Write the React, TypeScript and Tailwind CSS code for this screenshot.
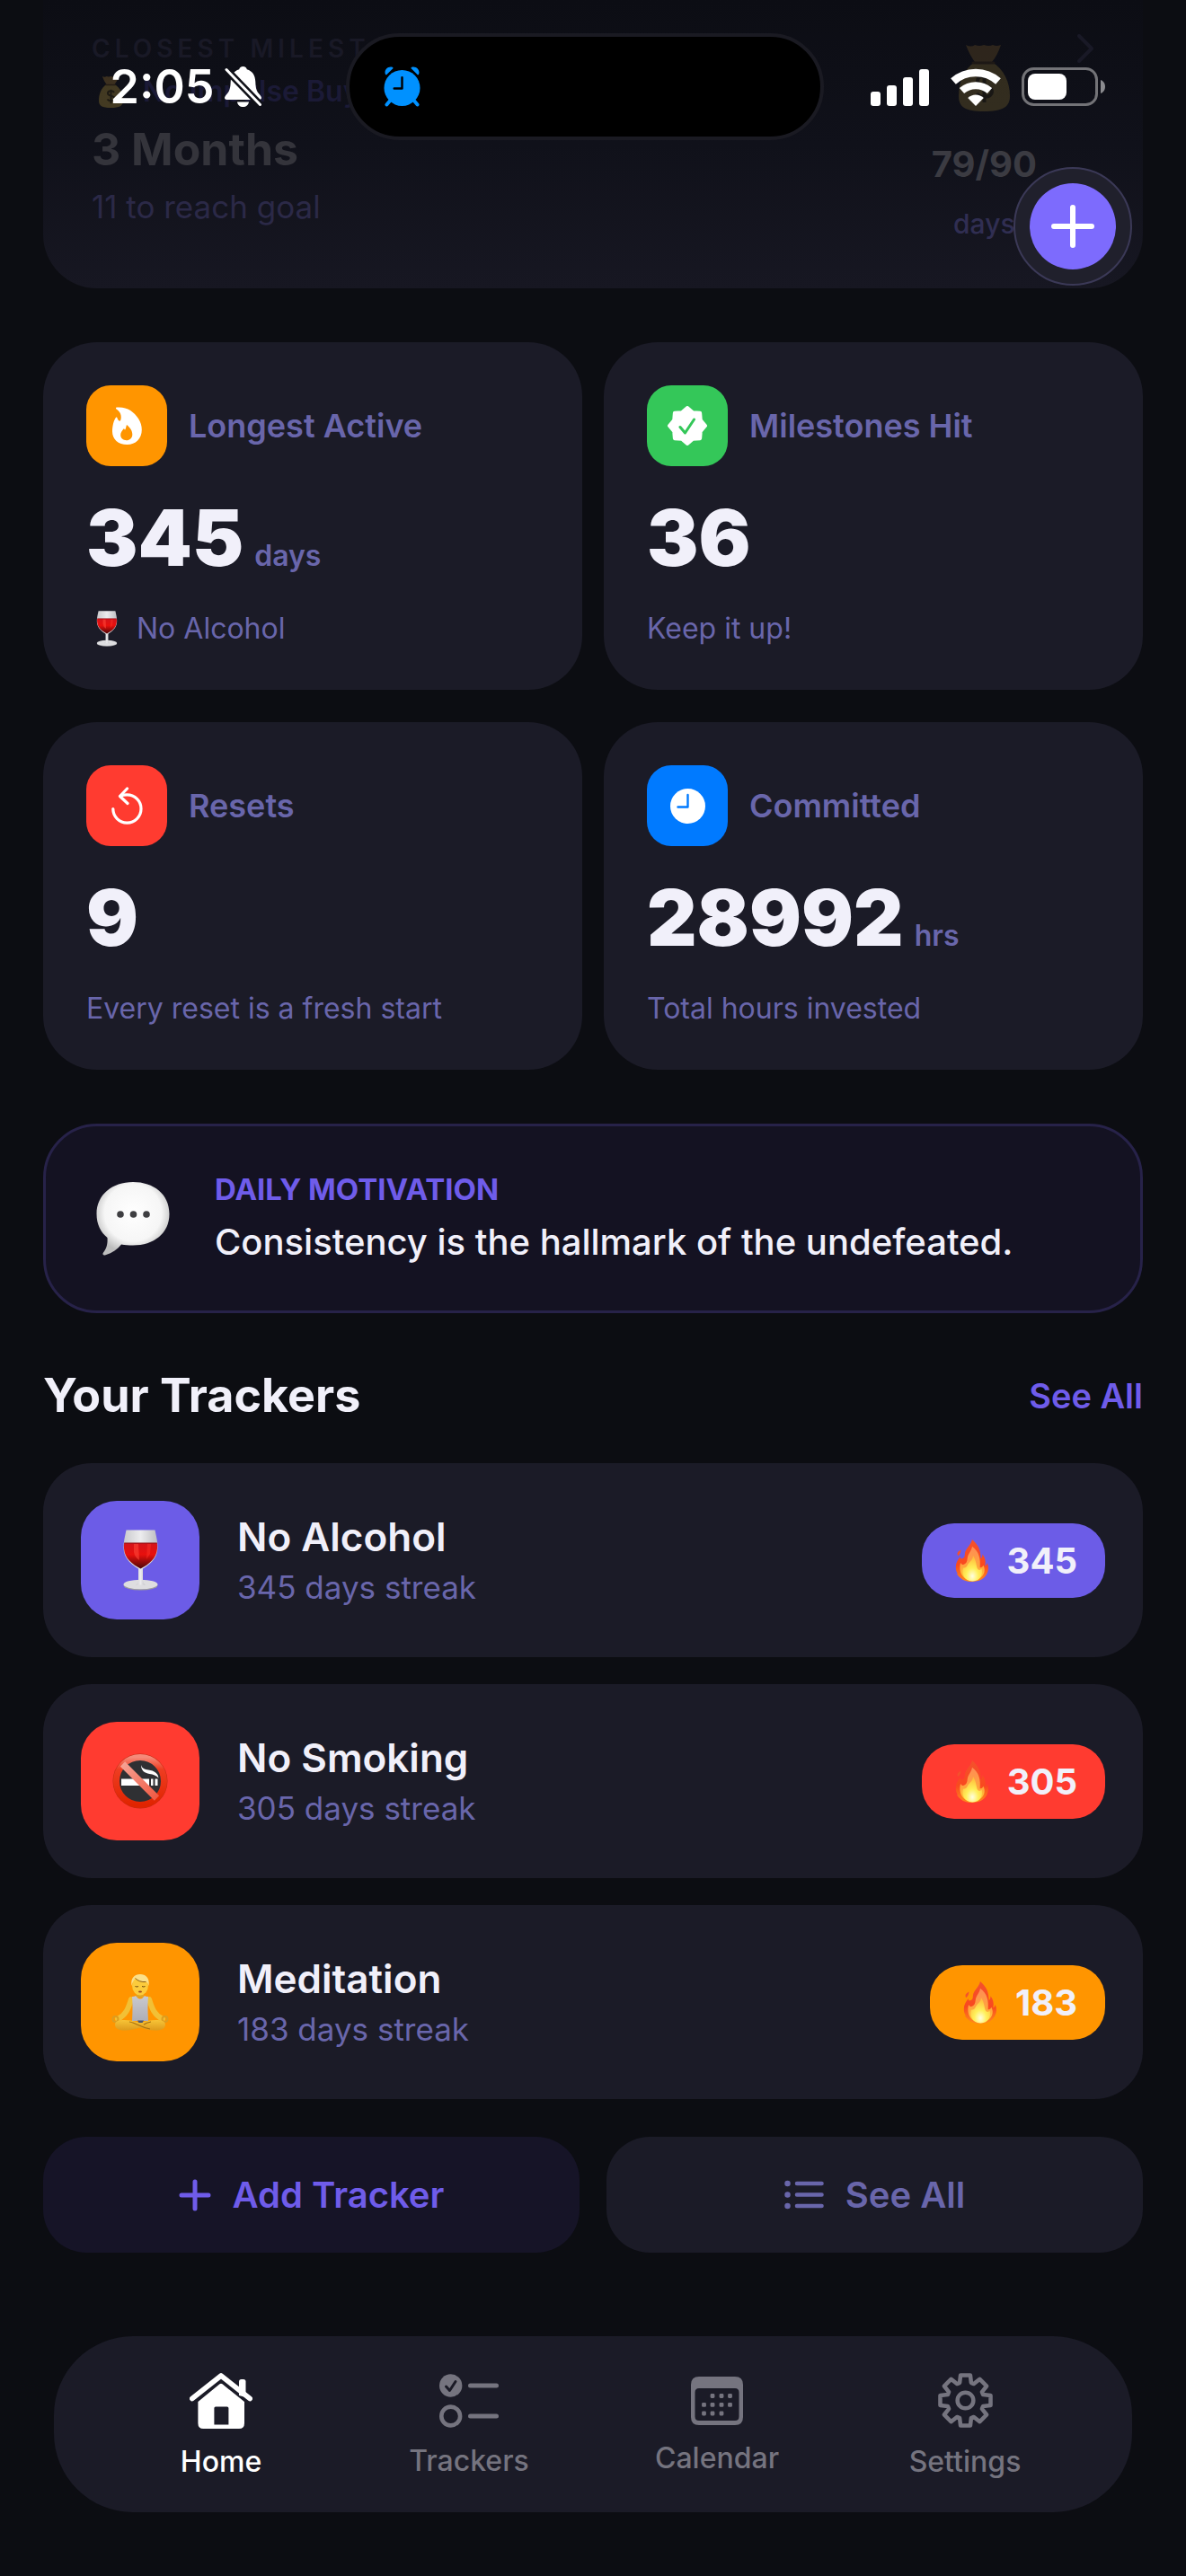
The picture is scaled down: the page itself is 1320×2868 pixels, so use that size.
import type { ReactNode } from "react";

type IconProps = { className?: string };

function polar(cx: number, cy: number, r: number, deg: number) {
  const a = ((deg - 90) * Math.PI) / 180;
  return `${(cx + r * Math.cos(a)).toFixed(2)},${(cy + r * Math.sin(a)).toFixed(2)}`;
}

const gearPoints = Array.from({ length: 8 })
  .flatMap((_, i) => {
    const a = i * 45;
    return [polar(32, 32, 21, a - 18), polar(32, 32, 29, a - 11), polar(32, 32, 29, a + 11), polar(32, 32, 21, a + 18)];
  })
  .join(" ");

const sealPoints = Array.from({ length: 16 })
  .map((_, i) => polar(22, 22, i % 2 === 0 ? 20 : 16, i * 22.5))
  .join(" ");

/* Emoji */

function WineGlass({ className }: IconProps) {
  return (
    <svg viewBox="0 0 39 68" className={className} aria-hidden="true">
      <defs>
        <linearGradient id="glass" x1="0" x2="1">
          <stop offset="0" stopColor="#c9c9cc" />
          <stop offset="0.5" stopColor="#ececee" />
          <stop offset="1" stopColor="#bdbdc1" />
        </linearGradient>
        <linearGradient id="wine" x1="0" y1="0" x2="0" y2="1">
          <stop offset="0" stopColor="#d3141b" />
          <stop offset="0.45" stopColor="#e8100d" />
          <stop offset="1" stopColor="#4a0507" />
        </linearGradient>
      </defs>
      <ellipse cx="19.5" cy="62" rx="19" ry="5.6" fill="#9b9b9f" />
      <ellipse cx="19.5" cy="61" rx="19" ry="5.2" fill="#dedee0" />
      <path d="M17 42h5v14q0 4 3 5.500h-11q3-1.500 3-5.500z" fill="url(#glass)" />
      <path d="M3.500 0.500h32C37 8 38.500 13 38.500 20c0 13-10 20-19 25C10.500 40 0.500 33 0.500 20 0.500 13 2 8 3.500 0.500z" fill="url(#glass)" />
      <path d="M1.200 15h36.600c.4 2 .4 4 .2 6-.8 11-9 17.500-18.500 22.500C10 38.500 1.800 32 1 21c-.2-2-.2-4 .2-6z" fill="url(#wine)" />
      <path d="M12 16h5l1 18q-5-3-6-9z" fill="#ff4a3c" opacity="0.55" />
      <path d="M27 16h4l-1 11-4 6z" fill="#ff3a2e" opacity="0.4" />
      <path d="M1.200 15h36.600" stroke="#8c1015" strokeWidth="1" />
    </svg>
  );
}

function Flame({ className }: IconProps) {
  return (
    <svg viewBox="0 0 38 49" className={className} aria-hidden="true">
      <defs>
        <linearGradient id="flameOuter" x1="0" y1="0" x2="0" y2="1">
          <stop offset="0" stopColor="#f4512c" />
          <stop offset="0.6" stopColor="#f9491f" />
          <stop offset="1" stopColor="#ff8a1c" />
        </linearGradient>
        <linearGradient id="flameMid" x1="0" y1="0" x2="0" y2="1">
          <stop offset="0" stopColor="#ff8c55" />
          <stop offset="0.6" stopColor="#ffa63d" />
          <stop offset="1" stopColor="#ffd034" />
        </linearGradient>
        <radialGradient id="flameCore" cx="0.5" cy="0.8" r="0.7">
          <stop offset="0" stopColor="#fffde0" />
          <stop offset="0.45" stopColor="#fff05a" />
          <stop offset="1" stopColor="#ffc13d" />
        </radialGradient>
      </defs>
      <path d="M6 12c-4 2-5 4-3.500 7C5 17 5.500 15 6 12z" fill="#f4512c" />
      <path
        d="M19 0c-2 8-8 10-8.500 17 0 2-.5 4-1.500 4.500C7.500 22 6 24 5 20 2 24 0 27 0 32c0 4 1 6 2.500 8L1 39.500C5 46 11 49 19 49s14-3 17-9c2-4 2.500-8 .5-13-.5 2-1.500 3-2.500 3.500C35 25 34 21 31 17c0 3-.5 4-2 5C29 12 26 6 19 0z"
        fill="url(#flameOuter)"
      />
      <path
        d="M19 8c-1 6-5 8-5.500 14-.3 4-1.500 6-4 7-1.500.6-3-.5-4-2C3 36 7 47 19 47.500 31 47 36 38 32 30c-1 2-2 3-4 2.500C29 22 27 14 19 8z"
        fill="url(#flameMid)"
      />
      <path
        d="M20 19c0 5-5 7-6.500 11-.8 2-2.500 3-5 3C6.500 40 10 48 19 48.500S32 41 30 34c-1 1.500-3 2-4.500.5C23.500 31 24 24 20 19z"
        fill="url(#flameCore)"
      />
    </svg>
  );
}

function NoSmoking({ className }: IconProps) {
  return (
    <svg viewBox="0 0 62 62" className={className} aria-hidden="true">
      <defs>
        <linearGradient id="ban" x1="0" y1="0" x2="0" y2="1">
          <stop offset="0" stopColor="#f58a79" />
          <stop offset="0.25" stopColor="#ee3d22" />
          <stop offset="1" stopColor="#e02400" />
        </linearGradient>
        <linearGradient id="slash" x1="0" y1="0" x2="1" y2="1">
          <stop offset="0" stopColor="#f7a193" />
          <stop offset="1" stopColor="#ef5a43" />
        </linearGradient>
      </defs>
      <circle cx="31" cy="31" r="30.500" fill="#c22a13" />
      <circle cx="31" cy="31" r="26.500" fill="#2f3033" stroke="url(#ban)" strokeWidth="7" />
      <path d="M10 28.500h31v7.500H10zM43 28.500h2.500v7.500H43zM47.500 28.500h3v7.500h-3z" fill="#fff" />
      <path d="M32 13c1 4 4 5 8 5.500 7 .8 11 4 11.500 9-2.500-3-6-3.800-10-4.500-6-1-9.500-4-9.500-10z" fill="#fff" />
      <path d="M11.500 12l38 38" stroke="url(#slash)" strokeWidth="7.500" />
    </svg>
  );
}

function Meditating({ className }: IconProps) {
  return (
    <svg viewBox="0 0 64 63" className={className} aria-hidden="true">
      <defs>
        <linearGradient id="legs" x1="0" y1="0" x2="0" y2="1">
          <stop offset="0" stopColor="#f7c437" />
          <stop offset="1" stopColor="#dd9a1c" />
        </linearGradient>
        <linearGradient id="shirt" x1="0" y1="0" x2="0" y2="1">
          <stop offset="0" stopColor="#c9c9ce" />
          <stop offset="1" stopColor="#aeaeb5" />
        </linearGradient>
      </defs>
      <path d="M22 28c-3 9-5 17-15 22M42 28c3 9 5 17 15 22" fill="none" stroke="#f2c035" strokeWidth="6" strokeLinecap="round" />
      <circle cx="4.500" cy="50" r="3" fill="none" stroke="#dd9d1f" strokeWidth="2" />
      <circle cx="59.500" cy="50" r="3" fill="none" stroke="#dd9d1f" strokeWidth="2" />
      <path d="M28 18h8v8h-8z" fill="#e0a524" />
      <path d="M23 25q3 0 4-1 5 7 10 0 1 1 4 1-1 10 0 27H23q1-17 0-27z" fill="url(#shirt)" />
      <path d="M4 56c0-4 5-5 10-5 6 0 11 1 18 3 7-2 12-3 18-3 5 0 10 1 10 5 0 5-5 6.500-11 6.500-7 0-12-2-17-3-5 1-10 3-17 3C9 62.500 4 61 4 56z" fill="url(#legs)" />
      <path d="M20 53c7 1 12 6 23 8M44 53c-3 .5-6 1.500-8 3" fill="none" stroke="#a8700f" strokeWidth="1.200" />
      <path d="M29 51.500h7l-1.500 2.500h-4z" fill="#4b5671" />
      <ellipse cx="32" cy="12.500" rx="9" ry="11" fill="#fbcb3c" />
      <path d="M22.500 13C21 4 26 0 32 0s11 4 9.500 13c-1-3-1.500-4-3-4.500-5 .5-9-1-12-3.500-2 2-3 4-4 8z" fill="#fbe08a" />
      <path d="M26.500 4.500c3 3 7 4.500 12 4" fill="none" stroke="#8a5c10" strokeWidth="1" />
      <path d="M26.500 13.500q2 1 3.500 0M34 13.500q2 1 3.500 0" fill="none" stroke="#6b450c" strokeWidth="1" />
      <ellipse cx="32" cy="19.500" rx="2" ry="1.100" fill="#9c4a1c" />
    </svg>
  );
}

function SpeechBubble({ className }: IconProps) {
  return (
    <svg viewBox="0 0 82 82" className={className} aria-hidden="true">
      <defs>
        <radialGradient id="bubble" cx="0.5" cy="0.42" r="0.56">
          <stop offset="0" stopColor="#ffffff" />
          <stop offset="0.7" stopColor="#f6f6f6" />
          <stop offset="1" stopColor="#bdbdbd" />
        </radialGradient>
      </defs>
      <path
        d="M41 0C18 0 0.500 14 0.500 35.500 0.500 47 5 56 12.500 62c.5 7-1 12-4.500 16.500-1.500 2 0 3.500 2.500 2.800C18 79 24 75 28 69.500c4 .8 8 1 13 1 23 0 40.500-13 40.500-35S64 0 41 0z"
        fill="url(#bubble)"
      />
      <circle cx="27" cy="36" r="3.800" fill="#3f3f42" />
      <circle cx="41.500" cy="36" r="3.800" fill="#3f3f42" />
      <circle cx="56" cy="36" r="3.800" fill="#3f3f42" />
    </svg>
  );
}

function MoneyBag({ className }: IconProps) {
  return (
    <svg viewBox="0 0 57 76" className={className} aria-hidden="true">
      <path d="M8 2q6 3 10 0 5 2 10 0 6 2 10 0 4 2 9 0-4 12-10 19H18Q12 13 8 2z" fill="#6b5228" />
      <path d="M18 21h19c13 8 20 22 20 38 0 12-8 17-29 17S0 71 0 59c0-16 6-30 18-38z" fill="#77642c" />
      <path d="M16 22h23" stroke="#3a2a14" strokeWidth="3" strokeLinecap="round" />
      <path d="M36 40c-3-5-15-5-15 2 0 8 16 4 16 12 0 7-13 8-17 2M28.500 33v33" fill="none" stroke="#2c240f" strokeWidth="4" />
    </svg>
  );
}

/* Status bar glyphs */

function BellOff({ className }: IconProps) {
  return (
    <svg viewBox="0 0 41 45" className={className} aria-hidden="true">
      <path
        d="M20.500 0c2.500 0 4 1.500 4.300 3.300C31 5 34 10 34.300 17c.3 7 1 10 4 13.500 2 2.300 2.700 3.500 2.700 4.500 0 1.300-1 2-2.500 2h-36C1 37 0 36.200 0 35c0-1 .7-2.200 2.700-4.500 3-3.500 3.700-6.500 4-13.500C7 10 10 5 16.200 3.300 16.500 1.500 18 0 20.500 0zM14 39.500h13c-.5 3.500-3 5.500-6.500 5.500s-6-2-6.500-5.500z"
        fill="#fff"
      />
      <path d="M1 2.500l40 41.500" stroke="#0f1017" strokeWidth="8" />
      <path d="M2 3.500l37.500 39" stroke="#fff" strokeWidth="3" strokeLinecap="round" />
    </svg>
  );
}

function AlarmClock({ className }: IconProps) {
  return (
    <svg viewBox="0 0 42 46" className={className} aria-hidden="true">
      <g stroke="#0091ff" strokeWidth="4" strokeLinecap="round">
        <path d="M8 38l-4.500 5.500M34 38l4.500 5.500" />
      </g>
      <path d="M2 9C0 4 5-1 10 .8c1 .4 1 1.200.3 1.800L3.800 9c-.6.700-1.400.7-1.800 0zM40 9c2-5-3-10-8-8.200-1 .4-1 1.200-.3 1.800L38.200 9c.6.700 1.400.7 1.800 0z" fill="#0091ff" />
      <circle cx="21" cy="24.500" r="20.500" fill="#0091ff" />
      <path d="M21 12.500V25h-9" fill="none" stroke="#000" strokeWidth="2.500" strokeLinecap="round" strokeLinejoin="round" />
    </svg>
  );
}

function Signal({ className }: IconProps) {
  return (
    <svg viewBox="0 0 66 42" className={className} fill="#fff" aria-hidden="true">
      <rect x="0" y="26" width="11" height="16" rx="3" />
      <rect x="18" y="19" width="11" height="23" rx="3" />
      <rect x="36" y="10" width="11" height="32" rx="3" />
      <rect x="54" y="1" width="11" height="41" rx="3" />
    </svg>
  );
}

function Wifi({ className }: IconProps) {
  return (
    <svg viewBox="0 0 58 42" className={className} fill="none" stroke="#fff" aria-hidden="true">
      <path d="M4 14.500a37.500 37.500 0 0 1 50 0" strokeWidth="8.500" />
      <path d="M13.500 25a23.500 23.500 0 0 1 31 0" strokeWidth="8" />
      <path d="M29 42l-8.800-9a12.500 12.500 0 0 1 17.600 0z" fill="#fff" stroke="none" />
    </svg>
  );
}

function Battery({ className }: IconProps) {
  return (
    <svg viewBox="0 0 94 43" className={className} aria-hidden="true">
      <rect x="1.500" y="1.500" width="82" height="40" rx="12" fill="none" stroke="#737377" strokeWidth="3" />
      <rect x="7" y="7" width="43" height="29" rx="8" fill="#fff" />
      <path d="M88 14c3 1 5 4 5 7.500S91 28 88 29z" fill="#8b8b8f" />
    </svg>
  );
}

/* Stat glyphs */

function FlameGlyph() {
  return (
    <svg viewBox="0 0 33 42" className="h-[42px] w-[33px]" aria-hidden="true">
      <path
        fillRule="evenodd"
        d="M5 .5C16-.5 24 5 29 13c2.500 4 3.800 8 3.800 12.500C32.800 35.500 26 42 16.500 42 6.500 42 0 36 0 27.500c0-6 1.500-12 3.800-15.500.6-.8 1.500-.6 1.700.3.300 1.500 1 3 2.800 3.400C9.500 16 10.500 11 9 7.500 8 5 6.500 4 4.500 2.500 3.500 1.500 4 .6 5 .5zM16 20c-.6 1.700-.8 3.700-1.600 5.300-.6.500-1-.3-1.400-1.300C11 26.500 9.200 28.500 9.200 31.300c0 3.600 2.800 5.900 6.500 5.900s6.600-2.500 6.600-6.500c0-4.500-2.800-8-6.300-10.700z"
        fill="#fff"
      />
    </svg>
  );
}

function SealGlyph() {
  return (
    <svg viewBox="0 0 44 44" className="size-[44px]" aria-hidden="true">
      <polygon points={sealPoints} fill="#fff" stroke="#fff" strokeWidth="4" strokeLinejoin="round" />
      <path d="M14 23.500l5.500 6.500 10-15" fill="none" stroke="#34c759" strokeWidth="3" strokeLinecap="round" strokeLinejoin="round" />
    </svg>
  );
}

function ResetGlyph() {
  return (
    <svg viewBox="0 0 35 42" className="h-[42px] w-[35px]" fill="none" stroke="#fff" strokeWidth="3.200" strokeLinecap="round" strokeLinejoin="round" aria-hidden="true">
      <path d="M1.800 24.500a15.600 15.600 0 1 0 15.600-15.600q-4 0-7.500 1.300" />
      <path d="M17.500 2L9.500 10.500l8.500 8" />
    </svg>
  );
}

function ClockGlyph() {
  return (
    <svg viewBox="0 0 39 39" className="size-[39px]" aria-hidden="true">
      <circle cx="19.500" cy="19.500" r="19.500" fill="#fff" />
      <path d="M19.500 7v13.500H8.500" fill="none" stroke="#007aff" strokeWidth="2.400" strokeLinecap="round" strokeLinejoin="round" />
    </svg>
  );
}

/* Tab bar glyphs */

function HomeIcon() {
  return (
    <svg viewBox="0 0 70 62" className="h-[62px] w-[70px]" aria-hidden="true">
      <path d="M55 25V9.500Q55 7 57.500 7h2.500q2.500 0 2.500 2.500V27z" fill="currentColor" />
      <path d="M2.800 28.500L35 3l32.200 25.500" fill="none" stroke="currentColor" strokeWidth="5.600" strokeLinecap="round" strokeLinejoin="round" />
      <path
        fillRule="evenodd"
        d="M33.500 12.300q1.500-1.200 3 0L61 32v24q0 6-6 6H15.400q-6 0-6-6V32zM29 37.500q-1.600 0-1.600 1.600V57.500h16V39.100q0-1.600-1.600-1.600z"
        fill="currentColor"
      />
    </svg>
  );
}

function TrackersIcon() {
  return (
    <svg viewBox="0 0 66 60" className="h-[60px] w-[66px]" fill="none" strokeLinecap="round" aria-hidden="true">
      <circle cx="12.700" cy="13" r="12.700" fill="currentColor" />
      <path d="M7.500 14l4 4.500 6.500-10" stroke="#1b1b27" strokeWidth="3" strokeLinejoin="round" />
      <circle cx="12.700" cy="47" r="10.400" stroke="currentColor" strokeWidth="4.600" />
      <path d="M34.500 13h29M34.500 47h29" stroke="currentColor" strokeWidth="5" />
    </svg>
  );
}

function CalendarIcon() {
  const dots = [
    [24, 21.5], [34, 21.5], [43.5, 21.5],
    [14.5, 31.3], [24, 31.3], [34, 31.3], [43.5, 31.3],
    [14.5, 41], [24, 41], [34, 41],
  ];
  return (
    <svg viewBox="0 0 58 54" className="h-[54px] w-[58px]" fill="currentColor" aria-hidden="true">
      <path
        fillRule="evenodd"
        d="M9 0h40q9 0 9 9v36q0 9-9 9H9q-9 0-9-9V9q0-9 9-9zM9 13q-4.500 0-4.500 4.500V44.500Q4.500 49 9 49h40q4.500 0 4.500-4.500V17.500Q53.500 13 49 13z"
      />
      {dots.map(([x, y]) => (
        <rect key={`${x}-${y}`} x={x - 2.4} y={y - 2.4} width="4.8" height="4.8" rx="1.3" />
      ))}
    </svg>
  );
}

function GearIcon() {
  return (
    <svg viewBox="0 0 64 64" className="size-[63px]" fill="none" stroke="currentColor" strokeWidth="4.600" strokeLinejoin="round" aria-hidden="true">
      <polygon points={gearPoints} />
      <circle cx="32" cy="32" r="9" />
    </svg>
  );
}

/* Data */

type Stat = {
  title: string;
  value: string;
  unit?: string;
  note: string;
  tile: string;
  glyph: ReactNode;
  emoji?: ReactNode;
};

const stats: Stat[] = [
  {
    title: "Longest Active",
    value: "345",
    unit: "days",
    note: "No Alcohol",
    tile: "bg-[#ff9500]",
    glyph: <FlameGlyph />,
    emoji: <WineGlass className="mx-[11px] h-[40px] w-[24px]" />,
  },
  { title: "Milestones Hit", value: "36", note: "Keep it up!", tile: "bg-[#34c759]", glyph: <SealGlyph /> },
  { title: "Resets", value: "9", note: "Every reset is a fresh start", tile: "bg-[#ff3b30]", glyph: <ResetGlyph /> },
  { title: "Committed", value: "28992", unit: "hrs", note: "Total hours invested", tile: "bg-[#007aff]", glyph: <ClockGlyph /> },
];

const trackers = [
  { name: "No Alcohol", days: 345, color: "bg-[#6c5ce7]", emoji: <WineGlass className="h-[68px] w-[39px]" /> },
  { name: "No Smoking", days: 305, color: "bg-[#ff3b30]", emoji: <NoSmoking className="size-[62px]" /> },
  { name: "Meditation", days: 183, color: "bg-[#ff9500]", emoji: <Meditating className="h-[63px] w-[64px]" /> },
];

const tabs = [
  { label: "Home", icon: <HomeIcon />, active: true },
  { label: "Trackers", icon: <TrackersIcon />, active: false },
  { label: "Calendar", icon: <CalendarIcon />, active: false },
  { label: "Settings", icon: <GearIcon />, active: false },
];

/* Sections */

function StatusBar() {
  return (
    <div className="absolute inset-x-0 top-0 flex items-center justify-center pt-[37px] pl-[34px]">
      <div className="mr-[94px] flex items-center gap-3">
        <span className="text-[52px] leading-[60px] font-semibold text-white">2:05</span>
        <BellOff className="h-[45px] w-[41px]" />
      </div>
      <div className="flex h-[119px] w-[532px] items-center rounded-full border-[4px] border-[#1a1a22] bg-black px-[38px]">
        <AlarmClock className="h-[45px] w-[41px]" />
      </div>
      <div className="ml-[52px] flex items-center gap-[22px]">
        <Signal className="h-[42px] w-[66px]" />
        <Wifi className="h-[42px] w-[58px]" />
        <Battery className="h-[43px] w-[94px]" />
      </div>
    </div>
  );
}

function MilestoneCard() {
  return (
    <section className="flex justify-between rounded-b-[60px] bg-linear-to-b from-[#0c0d14] via-[#10111a] to-[#171722] px-[54px] pt-[36px] pb-[54px]">
      <div>
        <h2 className="text-[28px] leading-[36px] font-semibold tracking-[0.18em] text-[#191926]">CLOSEST MILESTONE</h2>
        <p className="mt-2 flex items-center text-[32px] leading-[44px] font-semibold text-[#1b1a36]">
          <MoneyBag className="mx-2 h-[36px] w-[27px] opacity-50" />
          <span className="ml-[14px]">No Impulse Buying</span>
        </p>
        <p className="mt-3 text-[50px] leading-[60px] font-bold text-[#34343b]">3 Months</p>
        <p className="mt-[14px] text-[35px] leading-[40px] text-[#2b2947]">11 to reach goal</p>
      </div>
      <div className="flex items-start gap-[44px]">
        <div className="flex flex-col items-center pt-[12px]">
          <MoneyBag className="h-[76px] w-[57px] opacity-35" />
          <p className="mt-[36px] text-[40px] leading-[46px] font-bold text-[#3b3b42]">79/90</p>
          <p className="mt-[25px] text-[30px] leading-[36px] font-medium text-[#302e52]">days</p>
        </div>
        <svg viewBox="0 0 20 32" className="mt-[2px] h-[32px] w-[20px]" fill="none" stroke="#191926" strokeWidth="4" strokeLinecap="round" strokeLinejoin="round" aria-hidden="true">
          <path d="M3 2l14 14L3 30" />
        </svg>
      </div>
    </section>
  );
}

function StatCard({ stat }: { stat: Stat }) {
  return (
    <div className="rounded-[60px] bg-[#1b1b27] p-[48px]">
      <div className="flex items-center gap-6">
        <div className={`flex size-[90px] items-center justify-center rounded-[27px] ${stat.tile}`}>{stat.glyph}</div>
        <h3 className="text-[36px] leading-[42px] font-semibold text-[#6966ab]">{stat.title}</h3>
      </div>
      <p className="mt-[31px] flex items-baseline gap-3">
        <span className="text-[86px] leading-[98px] font-black text-[#f1f0fa]">{stat.value}</span>
        {stat.unit && <span className="text-[32px] leading-[40px] font-semibold text-[#6966ab]">{stat.unit}</span>}
      </p>
      <p className="mt-8 flex items-center gap-[10px] text-[32px] leading-[40px] text-[#6966ab]">
        {stat.emoji}
        {stat.note}
      </p>
    </div>
  );
}

function TrackerRow({ tracker }: { tracker: (typeof trackers)[number] }) {
  return (
    <li>
      <a href="#tracker" className="flex items-center gap-[42px] rounded-[54px] bg-[#1b1b27] p-[42px]">
        <span className={`flex size-[132px] items-center justify-center rounded-[40px] ${tracker.color}`}>{tracker.emoji}</span>
        <span className="flex flex-1 flex-col gap-2">
          <span className="text-[44px] leading-[52px] font-semibold text-[#f1f0fa]">{tracker.name}</span>
          <span className="text-[35px] leading-[44px] text-[#6966ab]">{tracker.days} days streak</span>
        </span>
        <span className={`flex items-center gap-[20px] rounded-[36px] px-[31px] py-[18px] ${tracker.color}`}>
          <Flame className="ml-[6px] h-[47px] w-[38px]" />
          <span className="text-[40px] leading-[47px] font-bold text-[#f1f0fa]">{tracker.days}</span>
        </span>
      </a>
    </li>
  );
}

export default function App() {
  return (
    <div className="relative bg-[#0c0d12] font-['Inter','Liberation_Sans',sans-serif]">
      <main className="px-[48px]">
        <MilestoneCard />

        <section className="mt-[60px] grid grid-cols-2 gap-x-6 gap-y-9">
          {stats.map((stat) => (
            <StatCard key={stat.title} stat={stat} />
          ))}
        </section>

        <section className="mt-[60px] flex items-center gap-[50px] rounded-[60px] border-[3px] border-[#272249] bg-[#141222] px-[56px] py-[50px]">
          <SpeechBubble className="size-[82px]" />
          <div className="flex flex-col gap-[13px]">
            <h2 className="text-[33px] leading-[40px] font-bold text-[#6f5cea]">DAILY MOTIVATION</h2>
            <p className="text-[40px] leading-[52px] font-medium text-[#f1f0fa]">Consistency is the hallmark of the undefeated.</p>
          </div>
        </section>

        <section>
          <div className="mt-[60px] flex items-center justify-between">
            <h2 className="text-[52px] leading-[64px] font-bold text-[#f1f0fa]">Your Trackers</h2>
            <a href="#trackers" className="text-[38px] leading-[48px] font-semibold text-[#6f5cea]">
              See All
            </a>
          </div>
          <ul className="mt-[43px] flex flex-col gap-[30px]">
            {trackers.map((tracker) => (
              <TrackerRow key={tracker.name} tracker={tracker} />
            ))}
          </ul>
          <div className="mt-[42px] grid grid-cols-2 gap-[30px] text-[40px] leading-[53px] font-semibold">
            <button type="button" className="flex items-center justify-center gap-6 rounded-[48px] bg-[#161427] py-[38px] text-[#6f5cea]">
              <svg viewBox="0 0 36 36" className="size-[36px]" stroke="currentColor" strokeWidth="5" strokeLinecap="round" aria-hidden="true">
                <path d="M18 3v30M3 18h30" />
              </svg>
              Add Tracker
            </button>
            <button type="button" className="flex items-center justify-center gap-6 rounded-[48px] bg-[#1b1b27] py-[38px] text-[#6966ab]">
              <svg viewBox="0 0 44 33" className="h-[33px] w-[44px]" stroke="currentColor" strokeLinecap="round" aria-hidden="true">
                <path d="M14 4h27.500M14 16.500h27.500M14 29h27.500" strokeWidth="4.600" />
                <path d="M3.500 4h.01M3.500 16.500h.01M3.500 29h.01" strokeWidth="6.500" />
              </svg>
              See All
            </button>
          </div>
        </section>
      </main>

      <div className="px-[60px] pt-[93px] pb-[72px]">
        <nav className="grid grid-cols-4 items-center rounded-[88px] bg-[#1b1b27] px-[48px] pt-[40px] pb-[37px]">
          {tabs.map((tab) => (
            <a
              key={tab.label}
              href={`#${tab.label.toLowerCase()}`}
              className={`flex flex-col items-center gap-[18px] text-[32px] leading-[38px] font-medium ${tab.active ? "text-white" : "text-[#75747f]"}`}
            >
              {tab.icon}
              {tab.label}
            </a>
          ))}
        </nav>
      </div>

      <StatusBar />
      <button
        type="button"
        aria-label="Add tracker"
        className="absolute top-[186px] right-[60px] flex size-[132px] items-center justify-center rounded-full border-2 border-[#3b3957] bg-[#20202c]"
      >
        <span className="flex size-[96px] items-center justify-center rounded-full bg-[#7d6bfd]">
          <svg viewBox="0 0 48 48" className="size-[48px]" stroke="#fff" strokeWidth="6" strokeLinecap="round" aria-hidden="true">
            <path d="M24 3v42M3 24h42" />
          </svg>
        </span>
      </button>
    </div>
  );
}
